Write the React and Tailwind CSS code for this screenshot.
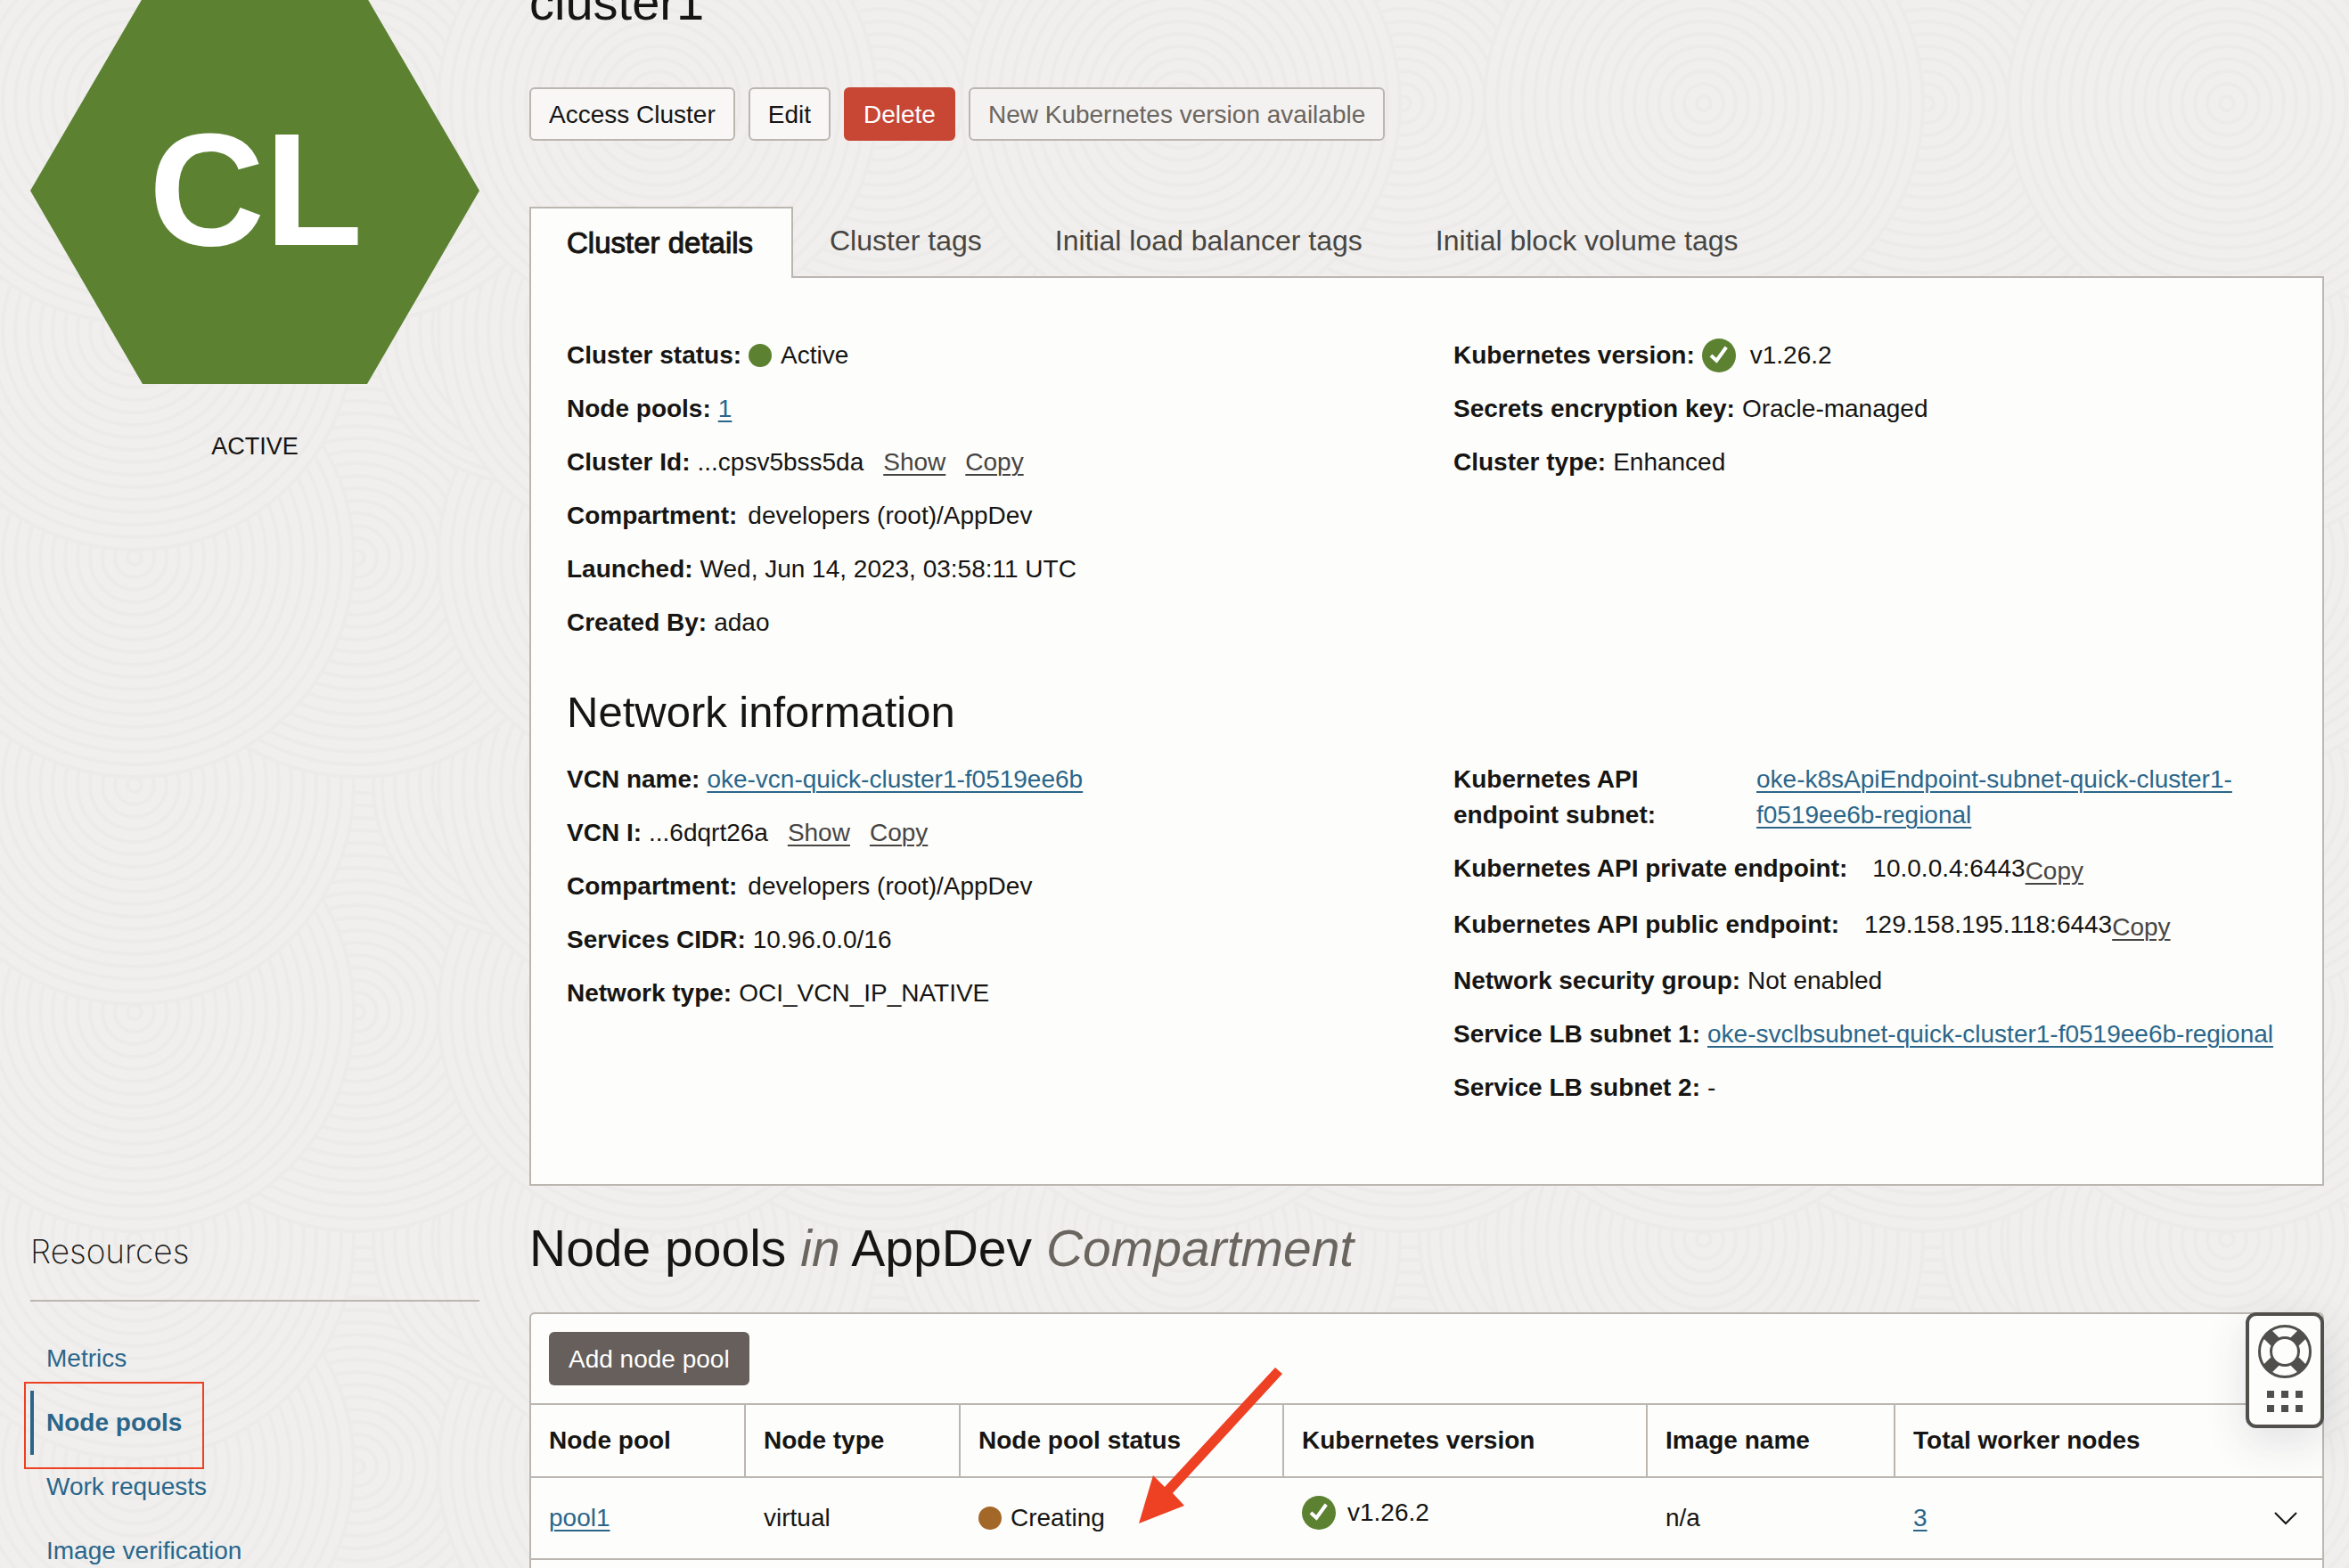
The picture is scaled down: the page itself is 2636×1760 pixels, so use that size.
import React from "react";

const RINGS = [8, 22, 36, 50, 64, 78, 92, 106, 120, 134, 148, 162, 176, 190, 204, 218, 232];
const ROWS = [7, 6, 5, 4, 3, 2, 1, 0];
const COLUMNS = [0, 1, 2, 3, 4, 5];

function Swirl({ id, radius }) {
  return (
    <g id={id} stroke="#ecebe9" strokeWidth="4" fill="none">
      <circle r={radius} fill="#f0efed" />
      {RINGS.filter((r) => r < radius).map((r) => (
        <circle key={r} r={r} />
      ))}
    </g>
  );
}

function Backdrop() {
  return (
    <svg className="absolute inset-0 h-full w-full" aria-hidden="true">
      <defs>
        <Swirl id="swirl-large" radius={246} />
        <Swirl id="swirl-small" radius={172} />
      </defs>
      {ROWS.map((row) => {
        const y = 116 + row * 255;
        return (
          <g key={row}>
            {COLUMNS.map((col) => {
              const x = col * 587 - 436;
              return row % 2 === 0 ? (
                <g key={col}>
                  <use href="#swirl-large" x={x + 250} y={y} />
                  <use href="#swirl-large" x={x} y={y} />
                </g>
              ) : (
                <g key={col}>
                  <use href="#swirl-large" x={x} y={y} />
                  <use href="#swirl-small" x={x + 440} y={y} />
                </g>
              );
            })}
          </g>
        );
      })}
    </svg>
  );
}

function CheckBadge() {
  return (
    <svg width="38" height="38" viewBox="0 0 38 38" className="shrink-0" aria-hidden="true">
      <circle cx="19" cy="19" r="19" fill="#5b8131" />
      <path d="M10 19l6.300 5.800L27.200 9.800" fill="none" stroke="#fff" strokeWidth="4" />
    </svg>
  );
}

function Link({ children, className = "" }) {
  return (
    <a href="#" className={"text-[#2b668a] underline decoration-2 underline-offset-4 " + className}>
      {children}
    </a>
  );
}

function TextButton({ children }) {
  return (
    <button type="button" className="text-[#474542] underline decoration-2 underline-offset-4">
      {children}
    </button>
  );
}

function Field({ label, children, className = "gap-2" }) {
  return (
    <div className={"flex h-10 items-center whitespace-nowrap " + className}>
      <dt className="font-bold">{label}</dt>
      <dd className="flex items-center">{children}</dd>
    </div>
  );
}

function Endpoint({ label, value }) {
  return (
    <div className="flex h-[43px] items-start whitespace-nowrap">
      <dt className="mr-7 font-bold">{label}</dt>
      <dd className="flex h-full">
        <span>{value}</span>
        <span className="self-end">
          <TextButton>Copy</TextButton>
        </span>
      </dd>
    </div>
  );
}

const BUTTON = "h-[60px] rounded-md border-2 px-5 pt-[2px] ";

function Actions() {
  return (
    <div className="mt-[59px] flex gap-[15px]">
      <button type="button" className={BUTTON + "border-[#bcb6b1] bg-[#f8f7f6]"}>Access Cluster</button>
      <button type="button" className={BUTTON + "border-[#bcb6b1] bg-[#f8f7f6]"}>Edit</button>
      <button type="button" className={BUTTON + "border-[#c74634] bg-[#c74634] text-white"}>Delete</button>
      <button type="button" disabled className={BUTTON + "border-[#bcb6b1] bg-[#f4f2f1] text-[#6b6560]"}>
        New Kubernetes version available
      </button>
    </div>
  );
}

function Tabs() {
  return (
    <div role="tablist" className="relative mt-[74px] flex h-20 text-[32px]">
      <button
        type="button"
        role="tab"
        aria-selected="true"
        className="relative z-10 h-20 min-w-[296px] border-2 border-b-0 border-[#bcb6b1] bg-[#fdfdfb] px-10 text-left text-[33px] [-webkit-text-stroke:1px_#161513]"
      >
        Cluster details
      </button>
      {["Cluster tags", "Initial load balancer tags", "Initial block volume tags"].map((t) => (
        <button key={t} type="button" role="tab" aria-selected="false" className="h-[76px] px-[41px] text-[#474542]">
          {t}
        </button>
      ))}
    </div>
  );
}

function ShowCopy({ value }) {
  return (
    <span className="flex gap-[22px]">
      <span>{value}</span>
      <TextButton>Show</TextButton>
      <TextButton>Copy</TextButton>
    </span>
  );
}

function Details() {
  return (
    <div className="-mt-[2px] border-2 border-[#bcb6b1] bg-[#fdfdfb] px-10 pt-[67px] pb-[88px]">
      <div className="grid grid-cols-2 gap-x-[60px]">
        <dl className="flex flex-col gap-5">
          <Field label="Cluster status:">
            <span className="mr-[10px] h-[26px] w-[26px] rounded-full bg-[#5b8131]" />
            Active
          </Field>
          <Field label="Node pools:"><Link>1</Link></Field>
          <Field label="Cluster Id:"><ShowCopy value="...cpsv5bss5da" /></Field>
          <Field label="Compartment:" className="gap-3">developers (root)/AppDev</Field>
          <Field label="Launched:">Wed, Jun 14, 2023, 03:58:11 UTC</Field>
          <Field label="Created By:">adao</Field>
        </dl>
        <dl className="flex flex-col gap-5">
          <Field label="Kubernetes version:">
            <CheckBadge />
            <span className="ml-4">v1.26.2</span>
          </Field>
          <Field label="Secrets encryption key:">Oracle-managed</Field>
          <Field label="Cluster type:">Enhanced</Field>
        </dl>
      </div>
      <h2 className="mt-12 mb-6 text-[49px] leading-[64px]">Network information</h2>
      <div className="grid grid-cols-2 gap-x-[60px]">
        <dl className="flex flex-col gap-5">
          <Field label="VCN name:"><Link>oke-vcn-quick-cluster1-f0519ee6b</Link></Field>
          <Field label="VCN I:"><ShowCopy value="...6dqrt26a" /></Field>
          <Field label="Compartment:" className="gap-3">developers (root)/AppDev</Field>
          <Field label="Services CIDR:">10.96.0.0/16</Field>
          <Field label="Network type:">OCI_VCN_IP_NATIVE</Field>
        </dl>
        <dl className="flex flex-col gap-5">
          <div className="flex gap-10">
            <dt className="w-[300px] shrink-0 font-bold">Kubernetes API endpoint subnet:</dt>
            <dd><Link>oke-k8sApiEndpoint-subnet-quick-cluster1-f0519ee6b-regional</Link></dd>
          </div>
          <Endpoint label="Kubernetes API private endpoint:" value="10.0.0.4:6443" />
          <Endpoint label="Kubernetes API public endpoint:" value="129.158.195.118:6443" />
          <Field label="Network security group:">Not enabled</Field>
          <Field label="Service LB subnet 1:"><Link>oke-svclbsubnet-quick-cluster1-f0519ee6b-regional</Link></Field>
          <Field label="Service LB subnet 2:">-</Field>
        </dl>
      </div>
    </div>
  );
}

function StatusBadge() {
  return (
    <div className="flex flex-col items-center">
      <svg viewBox="0 0 504 433" className="-mt-[2px] w-full" role="img" aria-label="CL">
        <polygon points="126,0 378,0 504,216 378,433 126,433 0,216" fill="#5b8131" />
        <text x="253" y="277" textAnchor="middle" fill="#fff" className="text-[180px] font-bold">CL</text>
      </svg>
      <p className="mt-[50px] text-[27px]">ACTIVE</p>
    </div>
  );
}

function Resources() {
  return (
    <nav className="mt-[34px]">
      <h2 className="h-24 border-b-2 border-[#bcb6b1] pt-1 font-[Inter] text-[37px] leading-[72px] font-extralight">Resources</h2>
      <ul className="mt-7">
        <li className="flex h-[72px] items-center pl-[18px]"><a href="#" className="text-[#2b668a]">Metrics</a></li>
        <li className="relative flex h-[72px] items-center border-l-4 border-[#2b668a] pl-[14px]">
          <a href="#" className="font-bold text-[#2b668a]">Node pools</a>
          <span className="absolute -top-[10px] -left-[11px] h-[98px] w-[202px] border-2 border-[#ee4023]" />
        </li>
        <li className="flex h-[72px] items-center pl-[18px]"><a href="#" className="text-[#2b668a]">Work requests</a></li>
        <li className="flex h-[72px] items-center pl-[18px]"><a href="#" className="text-[#2b668a]">Image verification</a></li>
      </ul>
    </nav>
  );
}

function HelpWidget() {
  return (
    <button
      type="button"
      aria-label="Support"
      className="absolute -top-[2px] -right-[2px] flex h-[130px] w-[88px] flex-col items-center rounded-xl border-4 border-[#504f4b] bg-[#fdfdfb] pt-[10px] shadow-[0_16px_48px_rgba(60,60,90,0.14)]"
    >
      <svg width="60" height="60" viewBox="0 0 60 60" aria-hidden="true" fill="none" stroke="#504f4b">
        <path d="M10.500 10.500L19 19M49.500 10.500L41 19M10.500 49.500L19 41M49.500 49.500L41 41" strokeWidth="13" />
        <circle cx="30" cy="30" r="28.500" strokeWidth="3" />
        <circle cx="30" cy="30" r="15.500" fill="#fdfdfb" strokeWidth="3" />
      </svg>
      <svg width="40" height="24" viewBox="0 0 40 24" className="mt-[14px]" aria-hidden="true" fill="#504f4b">
        <path d="M0 0h8v8H0zM16 0h8v8h-8zM32 0h8v8h-8zM0 16h8v8H0zM16 16h8v8h-8zM32 16h8v8h-8z" />
      </svg>
    </button>
  );
}

const TH = "border-y-2 border-[#bcb6b1] px-5 text-left font-bold ";

function NodePools() {
  return (
    <section className="mt-[34px]">
      <h2 className="text-[57px] leading-[72px]">
        Node pools <em className="text-[#6b6560]">in</em> AppDev <em className="text-[#6b6560]">Compartment</em>
      </h2>
      <div className="relative mt-9 rounded-md border-2 border-[#bcb6b1] bg-[#fdfdfb]">
        <div className="p-5">
          <button type="button" className="block h-[60px] rounded-md bg-[#665f5b] px-[22px] pt-[2px] text-white">Add node pool</button>
        </div>
        <table className="w-full table-fixed border-separate border-spacing-0 whitespace-nowrap">
          <thead>
            <tr className="h-[84px]">
              <th className={TH + "w-[241px] border-r-2"}>Node pool</th>
              <th className={TH + "w-[241px] border-r-2"}>Node type</th>
              <th className={TH + "w-[363px] border-r-2"}>Node pool status</th>
              <th className={TH + "w-[408px] border-r-2"}>Kubernetes version</th>
              <th className={TH + "w-[278px] border-r-2"}>Image name</th>
              <th className={TH}>Total worker nodes</th>
            </tr>
          </thead>
          <tbody>
            <tr className="h-[92px] [&>td]:border-b-2 [&>td]:border-[#bcb6b1] [&>td]:px-5">
              <td><Link>pool1</Link></td>
              <td>virtual</td>
              <td>
                <span className="flex items-center gap-[10px]">
                  <span className="h-[26px] w-[26px] rounded-full bg-[#a36727]" />
                  Creating
                </span>
              </td>
              <td>
                <span className="flex items-center gap-[13px] pb-3"><CheckBadge />v1.26.2</span>
              </td>
              <td>n/a</td>
              <td>
                <span className="flex items-center justify-between pr-2">
                  <Link>3</Link>
                  <button type="button" aria-label="Expand row">
                    <svg width="26" height="16" viewBox="0 0 26 16" fill="none" stroke="#161513" strokeWidth="2" aria-hidden="true">
                      <path d="M1 2l12 12L25 2" />
                    </svg>
                  </button>
                </span>
              </td>
            </tr>
            <tr className="h-20"><td colSpan={6} /></tr>
          </tbody>
        </table>
        <svg width="162" height="180" viewBox="0 0 162 180" className="absolute top-[56px] left-[682px]" aria-hidden="true">
          <polygon points="153,4 161,11 38,145 51,159 0,179 16,125 29,138" fill="#ee4023" />
        </svg>
        <HelpWidget />
      </div>
    </section>
  );
}

export default function App() {
  return (
    <div className="relative h-screen overflow-hidden bg-[#f0efed] font-['Liberation_Sans',Arial,sans-serif] text-[28px] leading-10 text-[#161513]">
      <Backdrop />
      <div className="relative grid grid-cols-[504px_minmax(0,1fr)] gap-x-14 pr-7 pl-[34px]">
        <StatusBadge />
        <main>
          <h1 className="-mt-[33px] text-[56px] leading-[72px]">cluster1</h1>
          <Actions />
          <Tabs />
          <Details />
        </main>
        <Resources />
        <NodePools />
      </div>
    </div>
  );
}
